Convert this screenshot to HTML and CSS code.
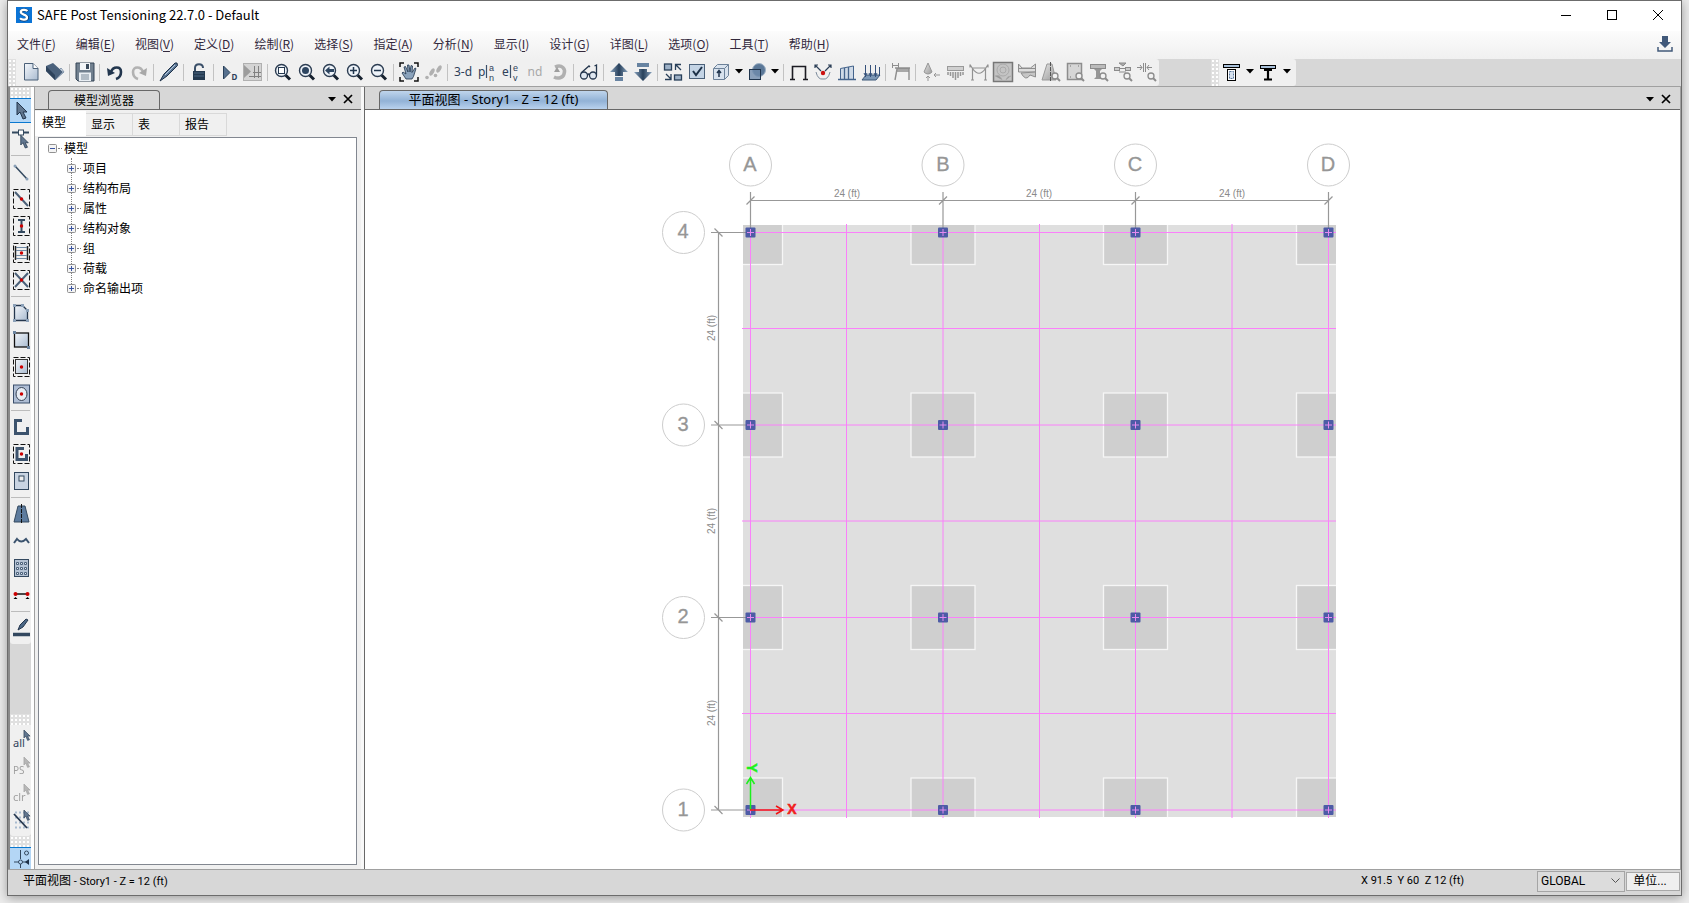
FILE: index.html
```html
<!DOCTYPE html>
<html lang="zh-CN">
<head>
<meta charset="utf-8">
<title>SAFE Post Tensioning 22.7.0 - Default</title>
<link rel="stylesheet" href="styles.css">
</head>
<body>
<svg class="defs" aria-hidden="true">
  <defs>
    <linearGradient id="gl" x1="0" y1="0" x2="1" y2="1"><stop offset="0" stop-color="#f4f7fb"/><stop offset="1" stop-color="#a9bbd0"/></linearGradient>
    <linearGradient id="gu" x1="0" y1="0" x2="1" y2="0"><stop offset="0" stop-color="#8aa4bf"/><stop offset=".5" stop-color="#27405b"/><stop offset="1" stop-color="#8aa4bf"/></linearGradient>
    <linearGradient id="gg" x1="0" y1="0" x2="1" y2="1"><stop offset="0" stop-color="#e4e4e4"/><stop offset="1" stop-color="#9a9a9a"/></linearGradient>
    <symbol id="mag" viewBox="0 0 20 20"><path d="M12.500 13l4.500 4.500" stroke="#16212f" stroke-width="3"/><circle cx="8.500" cy="8.500" r="6" fill="#eef3f9" stroke="#2c3d52" stroke-width="1.400"/></symbol>
    <symbol id="lens" viewBox="0 0 20 20"><path d="M16 16l3 3" stroke="#8c8c8c" stroke-width="2"/><circle cx="14" cy="14" r="3" fill="#f2f2f2" stroke="#8c8c8c" stroke-width="1.300"/></symbol>
    <symbol id="ptr" viewBox="0 0 12 18"><path d="M1 0v13l3-3 3 7 3-1-3-6h4z" fill="#61768f" stroke="#22354c"/></symbol>
    <symbol id="dash" viewBox="0 0 20 20"><rect x="2.500" y=".5" width="16" height="19" fill="none" stroke="#111" stroke-dasharray="5 2"/></symbol>
    <symbol id="dot" viewBox="0 0 4 4"><circle cx="2" cy="2" r="1.800" fill="#c00"/></symbol>
    <symbol id="down" viewBox="0 0 8 5"><path d="M0 0h8L4 4.500z" fill="#000"/></symbol>
    <symbol id="close" viewBox="0 0 10 10"><path d="M1 1l8 8M9 1L1 9" stroke="#000" stroke-width="1.700"/></symbol>
    <symbol id="minus" viewBox="0 0 9 9"><rect x=".5" y=".5" width="8" height="8" rx="1" fill="#f4f4f4" stroke="#919191"/><path d="M2 4.500h5" stroke="#3a55a0"/></symbol>
    <symbol id="plus" viewBox="0 0 9 9"><rect x=".5" y=".5" width="8" height="8" rx="1" fill="#f4f4f4" stroke="#919191"/><path d="M2 4.500h5M4.500 2v5" stroke="#3a55a0"/></symbol>
  </defs>
</svg>

<div class="window">
  <header class="titlebar">
    <svg class="logo" viewBox="0 0 16 16"><rect width="16" height="16" fill="#0b74d6"/><path d="M12 4.300C10.500 2.500 5 2.400 5 5.200 5 8 11.500 7.400 11.500 10.600 11.500 13.400 6 13.600 4 11.500" fill="none" stroke="#123c6c" stroke-width="3"/><path d="M11.500 4C10 2.300 4.800 2.300 4.800 5.100 4.800 8 11 7.300 11 10.400 11 13.200 5.800 13.200 4 11.200" fill="none" stroke="#fff" stroke-width="2.300"/></svg>
    <h1>SAFE Post Tensioning 22.7.0 - Default</h1>
    <div class="caption">
      <button aria-label="最小化"><svg width="10" height="10"><path d="M0 5.500h10" stroke="#000"/></svg></button>
      <button aria-label="最大化"><svg width="10" height="10"><rect x=".5" y=".5" width="9" height="9" fill="none" stroke="#000"/></svg></button>
      <button aria-label="关闭"><svg width="10" height="10"><path d="M0 0l10 10M10 0L0 10" stroke="#000"/></svg></button>
    </div>
  </header>

  <nav class="menubar">
    <button>文件(<u>F</u>)</button><button>编辑(<u>E</u>)</button><button>视图(<u>V</u>)</button><button>定义(<u>D</u>)</button><button>绘制(<u>R</u>)</button><button>选择(<u>S</u>)</button><button>指定(<u>A</u>)</button><button>分析(<u>N</u>)</button><button>显示(<u>I</u>)</button><button>设计(<u>G</u>)</button><button>详图(<u>L</u>)</button><button>选项(<u>O</u>)</button><button>工具(<u>T</u>)</button><button>帮助(<u>H</u>)</button>
    <button class="download" aria-label="下载"><svg width="16" height="16" viewBox="0 0 16 16"><path d="M5 0h6v6h3l-6 6-6-6h3z" fill="#41597a"/><path d="M1 11v4h14v-4" fill="none" stroke="#41597a" stroke-width="1.500"/></svg></button>
  </nav>

  <div class="toolbars">
    <div class="toolbar first" role="toolbar" aria-label="标准">
      <span class="grip"></span>
      <button aria-label="新建"><svg viewBox="0 0 20 20"><path d="M3.500 1.500h8.500l5 5v11.500h-13.500z" fill="url(#gl)" stroke="#4b6078"/><path d="M12 1.500v5h5" fill="#fff" stroke="#4b6078"/></svg></button>
      <button aria-label="打开"><svg viewBox="0 0 20 20"><path d="M10 18l9-8-3-4-6 7z" fill="#e9eef5" stroke="#8195ab"/><path d="M1 4l7-3 10 9-8 8-9-9z" fill="#4a617c"/><path d="M1 4l9 9v5l-9-9z" fill="#2e435c"/></svg></button>
      <i class="sep"></i>
      <button aria-label="保存"><svg viewBox="0 0 20 20"><path d="M1 1h18v18H3l-2-2z" fill="#71808f" stroke="#354556"/><rect x="5" y="1" width="10" height="7" fill="#f3f6f9"/><rect x="11" y="2" width="3" height="5" fill="#3a4a5c"/><rect x="4" y="10.500" width="12" height="8.500" fill="#e9eef3"/><path d="M6 13h8M6 15h8M6 17h8" stroke="#7b8a99"/></svg></button>
      <i class="sep"></i>
      <button aria-label="撤销"><svg viewBox="0 0 20 20"><path d="M6 10C8 4 16 4 16 10c0 3-2 6-5 7" fill="none" stroke="#22364e" stroke-width="2.600"/><path d="M2 6l1 8 7-3z" fill="#22364e"/></svg></button>
      <button aria-label="重做"><svg viewBox="0 0 20 20"><path d="M14 10C12 4 4 4 4 10c0 3 2 6 5 7" fill="none" stroke="#b2b2b2" stroke-width="2.600"/><path d="M18 6l-1 8-7-3z" fill="#a8a8a8"/></svg></button>
      <i class="sep"></i>
      <button aria-label="编辑"><svg viewBox="0 0 20 20"><path d="M1 19l4-7L16 1l2 0 .5 2.500L8 14z" fill="#5c7896" stroke="#1d3048"/><path d="M6 13L16 3" stroke="#b7c9dc"/></svg></button>
      <i class="sep"></i>
      <button aria-label="锁定"><svg viewBox="0 0 20 20"><path d="M6 10V6c0-5 8-5 8 0" fill="none" stroke="#3b5069" stroke-width="2"/><rect x="4" y="9" width="12" height="9" fill="#24394f"/><path d="M5 11h10M5 14h10" stroke="#4b6682"/></svg></button>
      <i class="sep"></i>
      <button aria-label="运行分析"><svg viewBox="0 0 20 20"><path d="M4.500 4v13l6.500-6.500z" fill="#56708e" stroke="#29405a"/><text x="12.500" y="18" class="ic b" font-size="8">D</text></svg></button>
      <button aria-label="网格"><svg viewBox="0 0 20 20"><rect x=".5" y="1.500" width="18" height="17" fill="#d4d4d4" stroke="#b0b0b0"/><path d="M10 10.500h8M6 14.500h12M11.500 4v12M15.500 4v12" stroke="#808080"/><path d="M1 3v13l7-6.500z" fill="#9c9c9c"/></svg></button>
      <i class="sep"></i>
      <button aria-label="框选缩放"><svg viewBox="0 0 20 20"><use href="#mag"/><rect x="5.500" y="5.500" width="6" height="6" fill="#fff" stroke="#24384f"/></svg></button>
      <button aria-label="全部缩放"><svg viewBox="0 0 20 20"><use href="#mag"/><circle cx="8.500" cy="8.500" r="3.500" fill="#2d4560"/></svg></button>
      <button aria-label="上一视图"><svg viewBox="0 0 20 20"><use href="#mag"/><path d="M4 8.500l4.500-4v2.500H13v3H8.500v2.500z" fill="#2d4560"/></svg></button>
      <button aria-label="放大"><svg viewBox="0 0 20 20"><use href="#mag"/><path d="M5 8.500h7M8.500 5v7" stroke="#1f344c" stroke-width="1.500"/></svg></button>
      <button aria-label="缩小"><svg viewBox="0 0 20 20"><use href="#mag"/><path d="M5 8.500h7" stroke="#1f344c" stroke-width="1.500"/></svg></button>
      <i class="sep"></i>
      <button aria-label="平移"><svg viewBox="0 0 20 20"><path d="M1 5V1h4M15 1h4v4M19 15v4h-4M5 19H1v-4" fill="none" stroke="#111" stroke-width="1.500"/><path d="M7 17l-4-6 1-1 3 2-2-7 1.500-.5L9 10 8.500 3H10l1 7 1-6.500 1.500.5-.5 6.500L16 6l1 .5-2.500 8L13 17z" fill="#8ba3bc" stroke="#20344b" stroke-width=".8"/></svg></button>
      <button aria-label="漫游"><svg viewBox="0 0 20 20" fill="#b0b0b0"><ellipse cx="9" cy="10" rx="2" ry="4" transform="rotate(30 9 10)"/><ellipse cx="16" cy="7" rx="2" ry="4" transform="rotate(30 16 7)"/><circle cx="4" cy="15.500" r="1.800"/><circle cx="12.500" cy="13.500" r="1.800"/></svg></button>
      <i class="sep"></i>
      <button class="txt">3-d</button>
      <button aria-label="平面"><svg viewBox="0 0 20 20"><text x="1" y="14" class="ic" font-size="12">p</text><path d="M9.500 3v13" stroke="#3c506b" stroke-width="1.200"/><text x="12" y="9" class="ic mini">a</text><text x="12" y="19" class="ic mini">n</text></svg></button>
      <button aria-label="立面"><svg viewBox="0 0 20 20"><text x="1" y="14" class="ic" font-size="12">e</text><path d="M9.500 3v13" stroke="#3c506b" stroke-width="1.200"/><text x="12" y="9" class="ic mini">e</text><text x="12" y="19" class="ic mini">v</text></svg></button>
      <button class="txt off">nd</button>
      <button aria-label="旋转"><svg viewBox="0 0 20 20"><path d="M6 5c7-3 11 2 9 7-1 4-6 5-10 3" fill="none" stroke="#b0b0b0" stroke-width="3.500"/><path d="M11 10l-6 0 3-5z" fill="#9e9e9e"/></svg></button>
      <i class="sep"></i>
      <button aria-label="显示选项"><svg viewBox="0 0 20 20" fill="#dfe7f0" stroke="#24364d" stroke-width="1.300"><circle cx="5" cy="13.500" r="3.500"/><circle cx="14" cy="13.500" r="3.500"/><path d="M8.500 13q1-2 2 0M2 11L10 4l1 1M17.500 13V3l-2 1" fill="none"/></svg></button>
      <i class="sep"></i>
      <button aria-label="上移楼层"><svg viewBox="0 0 20 20"><path d="M10 1l9 9h-5v4H6v-4H1z" fill="url(#gu)"/><rect x="6" y="15" width="8" height="4" fill="#6783a1"/></svg></button>
      <button aria-label="下移楼层"><svg viewBox="0 0 20 20"><path d="M10 19l9-9h-5V7H6v3H1z" fill="url(#gu)"/><rect x="4" y="1" width="12" height="4" fill="#6783a1"/></svg></button>
      <i class="sep"></i>
      <button aria-label="缩放对象"><svg viewBox="0 0 20 20" fill="none" stroke="#283f59" stroke-width="1.300"><rect x="1.500" y="2" width="7" height="6" fill="#9db1c7"/><rect x="11.500" y="13" width="7" height="5" fill="#9db1c7"/><path d="M18 8l-5-5M12.500 8V2.500H18M3 12l5 5M8 12v5.500H2"/></svg></button>
      <button aria-label="对象选项"><svg viewBox="0 0 20 20"><rect x="2.500" y="2.500" width="15" height="14" fill="#c4d4e5" stroke="#4a6079"/><path d="M6 9l3 4 6-8" fill="none" stroke="#1d3148" stroke-width="2"/></svg></button>
      <button aria-label="三维视图"><svg viewBox="0 0 20 20" fill="#d9e3ee" stroke="#6d8299"><path d="M2.500 6.500l4-4h11v11l-4 4h-11z"/><path d="M2.500 6.500h11v11M13.500 6.500l4-4"/><path d="M8 15V9M6 11l2-2.500 2 2.500" fill="none" stroke="#20354d" stroke-width="1.500"/></svg></button>
      <button class="drop" aria-label="更多"><svg class="dn"><use href="#down"/></svg></button>
      <button aria-label="阴影"><svg viewBox="0 0 20 20"><circle cx="12" cy="8" r="6.500" fill="#5b7898" stroke="#9db1c6"/><rect x="2.500" y="7.500" width="11" height="10" fill="#6f8bab" fill-opacity=".8" stroke="#20354d"/></svg></button>
      <button class="drop" aria-label="更多"><svg class="dn"><use href="#down"/></svg></button>
      <i class="sep"></i>
      <button aria-label="框架"><svg viewBox="0 0 20 20"><path d="M1 17.500h5M14 17.500h5M3.500 17V4.500h13V17" fill="none" stroke="#1b1b22" stroke-width="1.600"/></svg></button>
      <button aria-label="节点荷载"><svg viewBox="0 0 20 20" fill="none" stroke="#2b3e56"><path d="M2 3l6 6M18 3l-6 6M2 6V3h3M18 6V3h-3" stroke-width="1.200"/><path d="M3 10q2 8 7 7 5 1 7-7" stroke="#7b8a9b"/><circle cx="10" cy="11" r="2.200" fill="#c11" stroke="none"/></svg></button>
      <button aria-label="线荷载"><svg viewBox="0 0 20 20" fill="#cfdae7" stroke="#45648c"><path d="M3.500 17V6.500L16.500 4v13"/><path d="M1 17.500h18M7.500 6v11M11.500 5v12" stroke-width="1.300"/></svg></button>
      <button aria-label="面荷载"><svg viewBox="0 0 20 20"><path d="M1 18l4-5h14l-4 5z" fill="#7c97b5" stroke="#3d5878"/><path d="M4.500 3v12M9.500 3v12M14.500 3v12M18.500 5v9M3 11l1.500 3L6 11M8 11l1.500 3 1.500-3M13 11l1.500 3 1.500-3" fill="none" stroke="#34507a"/></svg></button>
      <i class="sep"></i>
      <button aria-label="变形"><svg viewBox="0 0 20 20" fill="none" stroke="#8e8e8e"><path d="M1.500 1v5M7.500 1v5M2 3.500h5"/><path d="M4 18L6 7h12v11M4 6h15M5 9h13" stroke-width="1.400"/></svg></button>
      <i class="sep"></i>
      <button aria-label="反力"><svg viewBox="0 0 20 20" fill="#979797" stroke="#979797"><path d="M7 1l4 9q-4 4-8 0z" fill="url(#gg)"/><path d="M7 19v-5M5 16l2-2 2 2M19 13h-6M15 11l-2 2 2 2" fill="none"/></svg></button>
      <button aria-label="土压"><svg viewBox="0 0 20 20"><rect x="2.500" y="4.500" width="16" height="4" fill="#d0d0d0" stroke="#999"/><path d="M3 10v3M5.500 10v4M8 10v6M10.500 10v8M13 10v6M15.500 10v4M18 10v3" stroke="#969696" stroke-width="1.500"/></svg></button>
      <button aria-label="内力"><svg viewBox="0 0 20 20" fill="none" stroke="#929292" stroke-width="1.200"><path d="M3.500 18V6h13v12M1 2.500l2.500 4Q10 16 16.500 6.500l2.500-4M2 18h3M15 18h3M1 2.500v3M19 2.500v3"/></svg></button>
      <button aria-label="应力云图"><svg viewBox="0 0 20 20" fill="#c4c4c4" stroke="#aaa"><rect x=".5" y=".5" width="19" height="19" stroke="#777" stroke-width="1.500"/><circle cx="10" cy="8" r="6"/><circle cx="10" cy="8" r="3"/><path d="M2 14q5-2 7 4M13 18q1-4 5-4" fill="#999"/></svg></button>
      <button aria-label="条带内力"><svg viewBox="0 0 20 20" fill="#ddd" stroke="#8e8e8e"><path d="M1.500 2v8h17V2l-5 4H5z"/><path d="M1 6.500h17M4 11q5 9 9 2l5.500 2v-5z" fill="#c6c6c6"/></svg></button>
      <button aria-label="预应力"><svg viewBox="0 0 20 20"><path d="M6 2h5l4 16H1z" fill="url(#gg)" stroke="#999"/><path d="M9.500 0v19" stroke="#555" stroke-dasharray="4 1"/><use href="#lens"/></svg></button>
      <button aria-label="板设计"><svg viewBox="0 0 20 20"><rect x="2.500" y="1.500" width="14" height="16" fill="#d6d6d6" stroke="#8d8d8d" stroke-width="1.500"/><path d="M5 4h1M13 4h1M5 15h1" stroke="#777"/><use href="#lens"/></svg></button>
      <button aria-label="梁设计"><svg viewBox="0 0 20 20"><rect x="1.500" y="2.500" width="15" height="4" fill="#bbb" stroke="#8b8b8b"/><path d="M5 7h8l-2 2v6l2 2H5l2-2V9z" fill="#969696"/><use href="#lens"/></svg></button>
      <button aria-label="冲切设计"><svg viewBox="0 0 20 20"><path d="M1 6.500h17M6 1h7l-3 3z" fill="#aaa" stroke="#8b8b8b"/><rect x="1.500" y="5.500" width="5" height="3" fill="#ccc" stroke="#8b8b8b"/><rect x="12.500" y="5.500" width="5" height="3" fill="#ccc" stroke="#8b8b8b"/><path d="M6 10h7" stroke="#8b8b8b"/><use href="#lens"/></svg></button>
      <button aria-label="裂缝检查"><svg viewBox="0 0 20 20"><path d="M0 5.500h5M3 3l2 2.500L3 8M15 5.500h-5M12 3l-2 2.500L12 8M6.500 1v9M8.500 1v9" fill="none" stroke="#8b8b8b"/><use href="#lens"/></svg></button>
    </div>
    <div class="toolbar second" role="toolbar" aria-label="截面">
      <span class="grip"></span>
      <button aria-label="柱截面"><svg viewBox="0 0 20 20"><rect x="2.500" y="2.500" width="16" height="3" fill="#a9c1da" stroke="#000"/><rect x="6.500" y="7.500" width="8" height="11" fill="#fff" stroke="#000"/><rect x="8.500" y="9.500" width="4" height="7" fill="#d6e1ee" stroke="#58779c" stroke-dasharray="2 1"/></svg></button>
      <button class="drop" aria-label="更多"><svg class="dn"><use href="#down"/></svg></button>
      <button aria-label="梁截面"><svg viewBox="0 0 20 20"><rect x="2.500" y="3.500" width="15" height="3" fill="#a9c1da" stroke="#000"/><path d="M6 8h8M6 17.500h8M10 8v9" stroke="#000" stroke-width="2.200"/></svg></button>
      <button class="drop" aria-label="更多"><svg class="dn"><use href="#down"/></svg></button>
    </div>
  </div>

  <main class="work">
    <aside class="strip">
      <div class="tools">
        <span class="hgrip"></span>
        <button class="on" aria-label="选择"><svg viewBox="0 0 20 20"><use href="#ptr" x="5" y="1" width="12" height="18"/></svg></button>
        <button aria-label="重塑"><svg viewBox="0 0 20 20"><path d="M1 3.500h17" stroke="#33495f" stroke-width="2"/><rect x="7.500" y="1" width="5" height="5" fill="#fff" stroke="#33495f"/><use href="#ptr" x="9" y="6" width="9" height="14"/></svg></button>
        <i class="hsep"></i>
        <button aria-label="画线"><svg viewBox="0 0 20 20"><path d="M4 4l12 13" stroke="#33495f" stroke-width="1.500"/><circle cx="4" cy="4" r="1.500" fill="#8aa0b7"/><circle cx="16" cy="17" r="1.500" fill="#8aa0b7"/></svg></button>
        <button aria-label="快速画线"><svg viewBox="0 0 20 20"><use href="#dash"/><path d="M4 3l13 14" stroke="#4b6078" stroke-width="2"/><use href="#dot" x="8.500" y="8" width="4" height="4"/></svg></button>
        <button aria-label="快速画柱"><svg viewBox="0 0 20 20"><use href="#dash"/><path d="M7 4h7M7 16h7M10.500 4v12" stroke="#33495f" stroke-width="2"/><use href="#dot" x="8.500" y="8" width="4" height="4"/></svg></button>
        <button aria-label="快速画梁"><svg viewBox="0 0 20 20"><use href="#dash"/><path d="M4.500 3v14M16.500 3v14" stroke="#222" stroke-width="1.500"/><path d="M5 4.500h11M5 7.500h11M5 12.500h11M5 15.500h11" stroke="#6f88a3"/><use href="#dot" x="8.500" y="8" width="4" height="4"/></svg></button>
        <button aria-label="快速画支撑"><svg viewBox="0 0 20 20"><use href="#dash"/><path d="M4 3l13 14M17 3L4 17" stroke="#4b6078" stroke-width="2"/><use href="#dot" x="8.500" y="8" width="4" height="4"/></svg></button>
        <i class="hsep"></i>
        <button aria-label="画板"><svg viewBox="0 0 20 20"><path d="M3.500 2.500h8l5 5v10h-13z" fill="url(#gl)" stroke="#24364d" stroke-width="1.300"/><path d="M2 1h3v3H2zM10 1h3v3h-3zM15 6h3v3h-3zM15 16h3v3h-3zM2 16h3v3H2z" fill="#8ca1b8"/></svg></button>
        <button aria-label="画矩形板"><svg viewBox="0 0 20 20"><rect x="3.500" y="3" width="14" height="14" fill="url(#gl)" stroke="#111" stroke-width="1.300"/><path d="M2 1h3v3H2zM16 16h3v3h-3z" fill="#6b84a0"/></svg></button>
        <button aria-label="快速画板"><svg viewBox="0 0 20 20"><use href="#dash"/><rect x="4.500" y="2.500" width="12" height="14" fill="url(#gl)" stroke="#333"/><use href="#dot" x="8.500" y="8" width="4" height="4"/></svg></button>
        <button aria-label="画圆板"><svg viewBox="0 0 20 20"><rect x="2.500" y="1" width="16" height="18" fill="#aebdd4" stroke="#3a4e6b"/><ellipse cx="10.500" cy="10" rx="5.500" ry="6.500" fill="#e6ecf4" stroke="#333f52"/><use href="#dot" x="8.500" y="8" width="4" height="4"/></svg></button>
        <i class="hsep"></i>
        <button aria-label="画墙"><svg viewBox="0 0 20 20"><path d="M11 3.500H4.500v13h12V10" fill="none" stroke="#3c536d" stroke-width="3"/></svg></button>
        <button aria-label="快速画墙"><svg viewBox="0 0 20 20"><use href="#dash"/><path d="M13 4.500H6v11h9.500V10" fill="none" stroke="#3c536d" stroke-width="3"/><use href="#dot" x="8.500" y="8" width="4" height="4"/></svg></button>
        <button aria-label="画洞口"><svg viewBox="0 0 20 20"><rect x="3.500" y="1.500" width="14" height="17" fill="#c9d4e2" stroke="#33485f"/><rect x="8" y="5" width="5" height="5" fill="#eee" stroke="#33485f"/></svg></button>
        <i class="hsep"></i>
        <button aria-label="画设计条带"><svg viewBox="0 0 20 20"><path d="M7 2h7l4 16H3z" fill="#5d7b9d" stroke="#33485f"/><path d="M10.500 0v20" stroke="#111" stroke-dasharray="4 1"/></svg></button>
        <button aria-label="画预应力筋"><svg viewBox="0 0 20 20"><path d="M3 12l3-4q4 5 9 0l3 4" fill="none" stroke="#3b536e" stroke-width="2"/></svg></button>
        <button aria-label="画轴网"><svg viewBox="0 0 20 20"><rect x="3.500" y="1.500" width="14" height="17" fill="#b4c2d4" stroke="#33485f"/><path d="M5.500 4.500h2v2h-2zM9.500 4.500h2v2h-2zM13.500 4.500h2v2h-2zM5.500 9.500h2v2h-2zM9.500 9.500h2v2h-2zM13.500 9.500h2v2h-2zM5.500 14.500h2v2h-2zM9.500 14.500h2v2h-2zM13.500 14.500h2v2h-2z" fill="#e6edf5" stroke="#4c627b"/></svg></button>
        <button aria-label="画尺寸线"><svg viewBox="0 0 20 20"><path d="M4 9h13" stroke="#111" stroke-width="1.500"/><circle cx="4.500" cy="9" r="2" fill="#c00"/><circle cx="16.500" cy="9" r="2" fill="#c00"/><path d="M2.500 14l2-2 2 2zM14.500 14l2-2 2 2z" fill="#000"/></svg></button>
        <i class="hsep"></i>
        <button aria-label="画剖切"><svg viewBox="0 0 20 20"><path d="M2 16.500h17" stroke="#33485f" stroke-width="3.500"/><path d="M7 12l2-5 6-6 2 1-5 7z" fill="#4b6886" stroke="#24364d"/></svg></button>
      </div>
      <div class="tools low">
        <span class="hgrip"></span>
        <button aria-label="全选"><svg viewBox="0 0 20 20"><text x="2" y="18" class="ic" font-size="11">all</text><use href="#ptr" x="12" y="1" width="8" height="11"/></svg></button>
        <button class="off" aria-label="上次选择"><svg viewBox="0 0 20 20"><text x="2" y="18" class="ic" font-size="10">PS</text><use href="#ptr" x="12" y="1" width="8" height="11"/></svg></button>
        <button class="off" aria-label="清除选择"><svg viewBox="0 0 20 20"><text x="2" y="18" class="ic" font-size="11">clr</text><use href="#ptr" x="12" y="1" width="8" height="11"/></svg></button>
        <button aria-label="相交线选择"><svg viewBox="0 0 20 20"><path d="M4 2.500h14M4 7.500h14M4 12.500h14M4 17.500h14" stroke="#a9bbcf" stroke-width="2" stroke-dasharray="2 2"/><path d="M3 4l13 14" stroke="#24364d" stroke-width="1.800"/><use href="#ptr" x="12" y="0" width="8" height="11"/></svg></button>
      </div>
      <div class="tools snap">
        <span class="hgrip"></span>
        <button class="on" aria-label="捕捉"><svg viewBox="0 0 20 20"><path d="M3 14h14M9.500 2v9M9.500 16v4" stroke="#33485f"/><circle cx="9.500" cy="14" r="2" fill="#b4d6f5" stroke="#33485f"/><circle cx="15.500" cy="5" r="2" fill="none" stroke="#33485f"/><path d="M14 14l4-3v6z" fill="#1f3148"/></svg></button>
      </div>
    </aside>

    <section class="explorer">
      <div class="head">
        <h2 class="doctab">模型浏览器</h2>
        <div class="acts"><button aria-label="窗口菜单"><svg class="dn"><use href="#down"/></svg></button><button aria-label="关闭面板"><svg class="cl"><use href="#close"/></svg></button></div>
      </div>
      <div class="tabs" role="tablist"><button role="tab" class="cur">模型</button><button role="tab">显示</button><button role="tab">表</button><button role="tab">报告</button></div>
      <div class="tree">
        <div class="node"><svg class="ex"><use href="#minus"/></svg><span>模型</span></div>
        <ul>
          <li class="node"><svg class="ex"><use href="#plus"/></svg><span>项目</span></li>
          <li class="node"><svg class="ex"><use href="#plus"/></svg><span>结构布局</span></li>
          <li class="node"><svg class="ex"><use href="#plus"/></svg><span>属性</span></li>
          <li class="node"><svg class="ex"><use href="#plus"/></svg><span>结构对象</span></li>
          <li class="node"><svg class="ex"><use href="#plus"/></svg><span>组</span></li>
          <li class="node"><svg class="ex"><use href="#plus"/></svg><span>荷载</span></li>
          <li class="node"><svg class="ex"><use href="#plus"/></svg><span>命名输出项</span></li>
        </ul>
      </div>
    </section>

    <section class="view">
      <div class="head">
        <h2 class="doctab blue">平面视图 - Story1 - Z = 12 (ft)</h2>
        <div class="acts"><button aria-label="窗口菜单"><svg class="dn"><use href="#down"/></svg></button><button aria-label="关闭视图"><svg class="cl"><use href="#close"/></svg></button></div>
      </div>
      <div class="canvas">
        <svg class="plan" viewBox="365 110 1315 759" role="img" aria-label="Story1 平面">
          <defs>
            <g id="col"><rect x="-5" y="-5" width="10" height="10" rx="1" fill="#4d5ba6"/><path d="M-3.500 0h7M0-3.500v7" stroke="#e58af0"/></g>
            <g id="cols"><use href="#col" x="750.500"/><use href="#col" x="943"/><use href="#col" x="1135.500"/><use href="#col" x="1328.500"/></g>
            <g id="drops"><rect x="718.500" y="-32" width="64" height="64"/><rect x="911" y="-32" width="64" height="64"/><rect x="1103.500" y="-32" width="64" height="64"/><rect x="1296.500" y="-32" width="64" height="64"/></g>
            <clipPath id="slab"><rect x="743" y="225" width="593" height="592"/></clipPath>
          </defs>
          <rect x="743" y="225" width="593" height="592" fill="#dfdfdf"/>
          <g clip-path="url(#slab)" fill="#cfcfcf" stroke="#f6f6f6" stroke-width="1.300">
            <use href="#drops" y="232.500"/><use href="#drops" y="425"/><use href="#drops" y="617.500"/><use href="#drops" y="810"/>
          </g>
          <path stroke="#fa80fa" d="M846.500 224v594M1039.500 224v594M1232 224v594M742 328.500h594M742 521h594M742 713.500h594M750.500 232v586M943 232v586M1135.500 232v586M1328.500 232v586M750 232.500h586M750 425h586M750 617.500h586M750 810h586"/>
          <path stroke="#989898" stroke-width="1.200" fill="none" d="M750.500 192v36M943 192v36M1135.500 192v36M1328.500 192v36M750 200.500h578M711 232.500h35M711 425h35M711 617.500h35M711 810h35M718.500 232v578M746.500 204.500l8-8M939 204.500l8-8M1131.500 204.500l8-8M1324.500 204.500l8-8M714.500 228.500l8 8M714.500 421l8 8M714.500 613.500l8 8M714.500 806l8 8"/>
          <use href="#cols" y="232.500"/><use href="#cols" y="425"/><use href="#cols" y="617.500"/><use href="#cols" y="810"/>
          <g fill="#fff" stroke="#cdcdcd"><circle cx="750.500" cy="165" r="21"/><circle cx="943" cy="165" r="21"/><circle cx="1135.500" cy="165" r="21"/><circle cx="1328.500" cy="165" r="21"/><circle cx="683.500" cy="232.500" r="21"/><circle cx="683.500" cy="425" r="21"/><circle cx="683.500" cy="617.500" r="21"/><circle cx="683.500" cy="810" r="21"/></g>
          <g class="bubble"><text x="750" y="171">A</text><text x="943" y="171">B</text><text x="1135" y="171">C</text><text x="1328" y="171">D</text><text x="683" y="238">4</text><text x="683" y="431">3</text><text x="683" y="623">2</text><text x="683" y="816">1</text></g>
          <g class="dim"><text x="847" y="197">24 (ft)</text><text x="1039" y="197">24 (ft)</text><text x="1232" y="197">24 (ft)</text><text transform="translate(715 328) rotate(-90)">24 (ft)</text><text transform="translate(715 521) rotate(-90)">24 (ft)</text><text transform="translate(715 713) rotate(-90)">24 (ft)</text></g>
          <path d="M750.500 810V777.500M746.500 784l4-6.500 4 6.500" fill="none" stroke="#1cf01c" stroke-width="1.500"/>
          <path d="M750 810h33M776 806l7 4-7 4" fill="none" stroke="#f01414" stroke-width="1.500"/>
          <text class="axis" x="792" y="814" fill="#f02020" stroke="#f02020">X</text>
          <text class="axis" transform="translate(747 768) rotate(90)" fill="#1cf01c" stroke="#1cf01c">Y</text>
        </svg>
      </div>
    </section>
  </main>

  <footer class="status">
    <span>平面视图<span class="latin"> - Story1 - Z = 12 (ft)</span></span>
    <span class="coords latin">X 91.5&nbsp; Y 60&nbsp; Z 12 (ft)</span>
    <div class="pick"><select aria-label="坐标系"><option>GLOBAL</option></select><svg width="9" height="6" viewBox="0 0 9 6"><path d="M.5.500l4 4 4-4" fill="none" stroke="#555"/></svg></div>
    <button class="units">单位...</button>
  </footer>
</div>
</body>
</html>
```
FILE: styles.css
```css
* { box-sizing: border-box; }

body {
  margin: 0;
  height: 100vh;
  padding: 0 7px 7px;
  background: #ececec;
  color: #000;
  font: 12px/16px "Noto Sans CJK SC", sans-serif;
  overflow: hidden;
}

button {
  margin: 0;
  padding: 0;
  border: 0;
  background: none;
  color: inherit;
  font: inherit;
}

svg { display: block; }
.defs { position: absolute; width: 0; height: 0; }

.window {
  display: flex;
  flex-direction: column;
  height: 100%;
  border: 1px solid #6c6c6c;
  background: #d7d7d7;
  box-shadow: 0 2px 10px rgba(0, 0, 0, .35);
}

/* Title bar and menu */
.titlebar {
  display: flex;
  align-items: center;
  height: 30px;
  padding: 0 0 2px 8px;
  background: #fff;
}
.logo { width: 16px; height: 16px; }
.titlebar h1 { margin: 0 auto 0 5px; font: 13px/16px "Noto Sans CJK SC", sans-serif; }
.caption { display: flex; }
.caption button { display: grid; place-items: center; width: 46px; height: 28px; }

.menubar {
  display: flex;
  align-items: center;
  gap: 20px;
  height: 28px;
  padding: 0 8px 2px 9px;
  background: linear-gradient(#fcfcfc, #f0f0f0);
  color: #32283c;
}
.menubar u { text-underline-offset: 2px; }
.download { margin-left: auto; }

/* Toolbars */
.toolbars {
  display: flex;
  gap: 52px;
  height: 28px;
  border-bottom: 1px solid #a0a0a0;
}
.toolbar {
  display: flex;
  align-items: center;
  height: 27px;
  border-radius: 0 3px 3px 0;
  background: #f0f0f0;
}
.toolbar button {
  display: grid;
  place-items: center;
  flex: none;
  width: 24px;
  height: 27px;
  padding-bottom: 2px;
}
.toolbar button > svg { width: 20px; height: 20px; overflow: visible; }
.toolbar button.drop { width: 12px; }
.toolbar button > .dn, .acts .dn { width: 8px; height: 5px; }
.toolbar .txt { font: 12px/16px "Noto Sans", sans-serif; color: #2f415a; }
.toolbar .off { color: #a8a8a8; }
.grip {
  width: 8px;
  height: 27px;
  background: radial-gradient(circle, #fff 1px, transparent 1px) 0 0 / 4px 4px, #e0e0e0;
}
.first .grip { margin-right: 3px; }
.second { padding-right: 3px; }
.toolbar.second button.drop { width: 13px; }
.sep { flex: none; width: 1px; height: 17px; margin: 0 3px 0 2px; background: #c2c2c2; }
.ic { font-family: "Noto Sans", sans-serif; fill: #2f415a; }
.mini { font: 9px "Liberation Sans", sans-serif; }
.b { font-weight: bold; }

/* Work area */
.work { display: flex; flex: 1; min-height: 0; }

.strip {
  display: flex;
  flex-direction: column;
  width: 26px;
  border-left: 2px solid #8a8a8a;
  border-right: 3px solid #fff;
}
.tools {
  display: flex;
  flex-direction: column;
  flex: none;
  padding-bottom: 3px;
  border-radius: 0 0 3px 3px;
  background: #f0f0f0;
}
.tools button { display: grid; place-items: center; height: 27px; }
.tools button > svg { width: 20px; height: 20px; }
.tools .on {
  height: 25px;
  margin-bottom: 2px;
  border-top: 1px solid #0a78d0;
  border-bottom: 1px solid #0a78d0;
  background: #b4d6f5;
}
.tools .off { opacity: .45; filter: grayscale(1); }
.hgrip {
  height: 11px;
  background: radial-gradient(circle, #fff 1px, transparent 1px) 0 0 / 4px 4px, #e0e0e0;
}
.hsep { height: 1px; margin: 3px 1px 2px; background: #bcbcbc; }
.low { margin-top: auto; }
.snap { padding-bottom: 0; }
.tools.snap .on { height: 22px; margin: 0; border-bottom: 0; align-items: start; overflow: hidden; }

.head {
  display: flex;
  align-items: flex-end;
  height: 23px;
  border-bottom: 1px solid #686868;
  background: #d7d7d7;
}
.doctab {
  height: 19px;
  margin: 0;
  border: 1px solid #686868;
  border-bottom: 0;
  border-radius: 4px 4px 0 0;
  font: inherit;
  line-height: 17px;
  text-align: center;
}
.acts { display: flex; align-items: center; gap: 7px; margin-left: auto; padding-bottom: 5px; }
.acts .cl { width: 10px; height: 10px; }

.explorer {
  display: flex;
  flex-direction: column;
  width: 327px;
  border-left: 1px solid #a0a0a0;
  background: #f0f0f0;
}
.explorer .head { padding: 0 8px 0 13px; }
.explorer .doctab { width: 112px; }

.tabs { display: flex; align-items: flex-end; height: 26px; }
.tabs button {
  width: 47px;
  height: 23px;
  padding: 0 0 2px 5px;
  border: 1px solid #d9d9d9;
  border-left: 0;
  text-align: left;
}
.tabs .cur { width: 51px; height: 25px; padding: 0 0 4px 7px; border: 0; background: #fff; }

.tree {
  flex: 1;
  margin: 1px 4px 4px 3px;
  padding: 0 9px;
  border: 1px solid #828790;
  background: #fff;
}
.tree ul { margin: 0; padding: 0 0 0 19px; list-style: none; position: relative; }
.tree ul::before {
  content: "";
  position: absolute;
  left: 23px;
  top: 0;
  height: 130px;
  border-left: 1px dotted #808080;
}
.node { display: flex; align-items: center; gap: 7px; height: 20px; position: relative; }
.node::after {
  content: "";
  position: absolute;
  left: 10px;
  top: 10px;
  width: 4px;
  border-top: 1px dotted #808080;
}
.ex { width: 9px; height: 9px; position: relative; }

.view {
  display: flex;
  flex-direction: column;
  flex: 1;
  min-width: 0;
  margin-left: 3px;
  border-left: 1px solid #686868;
  border-right: 1px solid #a0a0a0;
  outline: 3px solid #f8f8f8;
  clip-path: inset(0 0 0 -3px);
}
.view .head { padding: 0 9px 0 14px; }
.blue {
  width: 229px;
  background: linear-gradient(#bfd5ec, #92b2d6 55%, #b9d2ee);
  font-family: "Noto Sans", "Noto Sans CJK SC", sans-serif;
  font-size: 13px;
}
.canvas { flex: 1; min-height: 0; background: #fff; }
.plan { width: 100%; height: 100%; }
.bubble, .dim, .axis { font-family: "Liberation Sans", sans-serif; text-anchor: middle; }
.bubble { font-size: 20px; fill: #969696; stroke: #969696; stroke-width: .3px; }
.dim { font-size: 10px; fill: #8a8a8a; }
.axis { font-size: 14px; font-weight: bold; stroke-width: .5px; }

/* Status bar */
.status {
  display: flex;
  align-items: center;
  height: 26px;
  padding: 0 1px 3px 15px;
  border-top: 1px solid #a0a0a0;
  font-family: Roboto, "Noto Sans CJK SC", sans-serif;
}
.latin { font-size: 11px; }
.coords { width: 176px; margin-left: auto; }
.pick { display: grid; align-items: center; width: 88px; height: 21px; }
.pick > * { grid-area: 1 / 1; }
.pick svg { justify-self: end; margin-right: 5px; pointer-events: none; }
.pick select {
  width: 100%;
  height: 100%;
  padding: 0 3px;
  border: 1px solid #a5a5a5;
  border-radius: 0;
  background: #dcdcdc;
  color: #000;
  font: inherit;
  appearance: none;
}
.units {
  width: 54px;
  height: 19px;
  margin-left: 1px;
  padding-right: 6px;
  border: 1px solid #a8a8a8;
  background: #efefef;
}
```
